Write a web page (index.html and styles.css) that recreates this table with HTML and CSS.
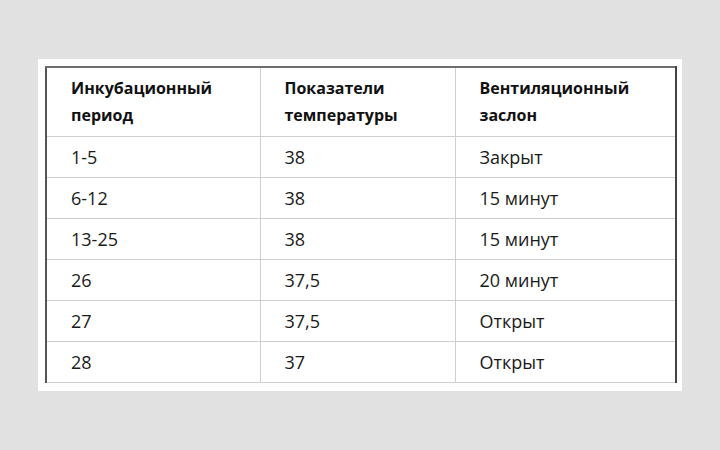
FILE: index.html
```html
<!DOCTYPE html>
<html lang="ru">
<head>
<meta charset="utf-8">
<link rel="stylesheet" href="styles.css">
</head>
<body>
<div class="panel">
  <table class="grid">
    <colgroup>
      <col class="c1"><col class="c2"><col class="c3">
    </colgroup>
    <thead>
      <tr class="head">
        <th>Инкубационный период</th>
        <th>Показатели температуры</th>
        <th>Вентиляционный заслон</th>
      </tr>
    </thead>
    <tbody>
      <tr><td>1-5</td><td>38</td><td>Закрыт</td></tr>
      <tr><td>6-12</td><td>38</td><td>15 минут</td></tr>
      <tr><td>13-25</td><td>38</td><td>15 минут</td></tr>
      <tr><td>26</td><td>37,5</td><td>20 минут</td></tr>
      <tr><td>27</td><td>37,5</td><td>Открыт</td></tr>
      <tr><td>28</td><td>37</td><td>Открыт</td></tr>
    </tbody>
  </table>
</div>
</body>
</html>
```
FILE: styles.css
```css
html, body {
  margin: 0;
  padding: 0;
}
body {
  background: #e1e1e1;
  width: 720px;
  height: 450px;
  overflow: hidden;
  font-family: "Open Sans", "Noto Sans", sans-serif;
  color: #111;
}
.panel {
  margin: 59px 0 0 38px;
  width: 644px;
  box-sizing: border-box;
  padding: 7px 6px 8px 7px;
  background: #fff;
}
.grid {
  border-collapse: collapse;
  width: 630px;
  table-layout: fixed;
  border-top: 2px solid #6e6e6e;
  border-left: 2px solid #555;
  border-right: 2px solid #444;
  border-bottom: 1px solid #c8c8c8;
}
.c1 { width: 214px; }
.c2 { width: 195px; }
.c3 { width: 221px; }
.grid th, .grid td {
  text-align: left;
  vertical-align: middle;
  padding: 0 10px 0 24px;
  border-right: 1px solid #cfcfcf;
  border-bottom: 1px solid #cfcfcf;
}
.grid th {
  height: 68px;
  font-size: 16px;
  font-weight: 700;
  line-height: 27px;
}
.grid td {
  height: 40px;
  font-size: 18px;
  font-weight: 400;
  line-height: 24px;
  color: #1a1a1a;
}
.grid tr > :last-child {
  border-right: none;
}
```
